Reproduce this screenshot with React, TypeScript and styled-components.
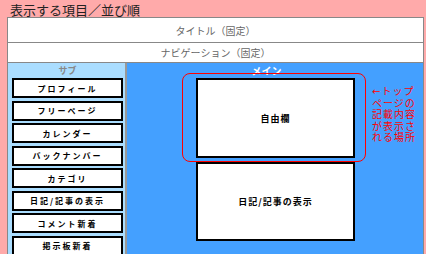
import styled, { createGlobalStyle } from 'styled-components';

const subItems = [
	'プロフィール',
	'フリーページ',
	'カレンダー',
	'バックナンバー',
	'カテゴリ',
	'日記/記事の表示',
	'コメント新着',
	'掲示板新着',
];

const noteLines = ['←トップ', 'ページの', '記載内容', 'が表示さ', 'れる場所'];

export default function App() {
	return (
		<>
			<GlobalStyle />
			<Page>
				<Heading>表示する項目／並び順</Heading>
				<Frame>
					<FixedRow $h={24}>タイトル（固定）</FixedRow>
					<FixedRow $h={19}>ナビゲーション（固定）</FixedRow>
					<Columns>
						<Sub>
							<SubLabel>サブ</SubLabel>
							<SubList>
								{subItems.map((item) => (
									<SubButton key={item}>{item}</SubButton>
								))}
							</SubList>
						</Sub>
						<Main>
							<MainLabel>メイン</MainLabel>
							<MainBody>
								<BoxStack>
									<Box $h={80}>
										自由欄
										<Highlight />
									</Box>
									<Box $h={79}>日記/記事の表示</Box>
								</BoxStack>
								<Note>
									{noteLines.map((line) => (
										<NoteLine key={line}>{line}</NoteLine>
									))}
								</Note>
							</MainBody>
						</Main>
					</Columns>
				</Frame>
			</Page>
		</>
	);
}

const GlobalStyle = createGlobalStyle`
  body {
    margin: 0;
    background: #ffaaaa;
    font-family: "Noto Sans CJK JP", "Noto Sans", sans-serif;
    overflow: hidden;
  }
`;

const Page = styled.div`
  padding: 2px 2px 0 7px;
`;

const Heading = styled.h1`
  margin: 0;
  padding-left: 3px;
  height: 15px;
  font-size: 13px;
  line-height: 15px;
  font-weight: normal;
  color: #222;
`;

const Frame = styled.div`
  border: 1px solid #888;
  border-bottom: none;
  background: #fff;
`;

const FixedRow = styled.div<{ $h: number }>`
  height: ${(p) => p.$h}px;
  border-bottom: 1px solid #888;
  display: flex;
  align-items: center;
  justify-content: center;
  font-size: 10px;
  color: #666;
`;

const Columns = styled.div`
  display: grid;
  grid-template-columns: 119px 1fr;
`;

const Sub = styled.div`
  background: #aaddff;
  border-right: 2px solid #999;
  padding: 0 2px 20px 4px;
`;

const SubLabel = styled.div`
  height: 15px;
  line-height: 15px;
  text-align: center;
  font-size: 9px;
  font-weight: bold;
  color: #888;
`;

const SubList = styled.div`
  display: flex;
  flex-direction: column;
  gap: 2.5px;
`;

const SubButton = styled.div`
  box-sizing: border-box;
  height: 20px;
  border: 2px solid #000;
  background: #fff;
  display: flex;
  align-items: center;
  justify-content: center;
  font-size: 8px;
  font-weight: bold;
  letter-spacing: 2px;
  color: #000;
`;

const Main = styled.div`
  background: #44a0ff;
`;

const MainLabel = styled.div`
  height: 15px;
  line-height: 15px;
  padding-right: 17px;
  text-align: center;
  font-size: 10px;
  font-weight: bold;
  color: #fff;
`;

const MainBody = styled.div`
  display: flex;
  align-items: flex-start;
  padding-left: 69px;
`;

const BoxStack = styled.div`
  width: 159px;
  display: flex;
  flex-direction: column;
  gap: 4px;
`;

const Box = styled.div<{ $h: number }>`
  position: relative;
  box-sizing: border-box;
  height: ${(p) => p.$h}px;
  border: 2px solid #000;
  background: #fff;
  display: flex;
  align-items: center;
  justify-content: center;
  font-size: 9px;
  font-weight: bold;
  letter-spacing: 1px;
  color: #000;
`;

const Highlight = styled.div`
  position: absolute;
  top: -7px;
  left: -16px;
  right: -13px;
  bottom: -6px;
  border: 1px solid #ff0000;
  border-radius: 8px;
  pointer-events: none;
`;

const Note = styled.div`
  margin: 8px 0 0 17px;
  color: #ff0000;
  white-space: nowrap;
`;

const NoteLine = styled.div`
  height: 11.5px;
  font-family: "DejaVu Sans", "Noto Sans CJK JP", sans-serif;
  font-size: 10px;
  line-height: 11.5px;
  letter-spacing: 1px;
`;
